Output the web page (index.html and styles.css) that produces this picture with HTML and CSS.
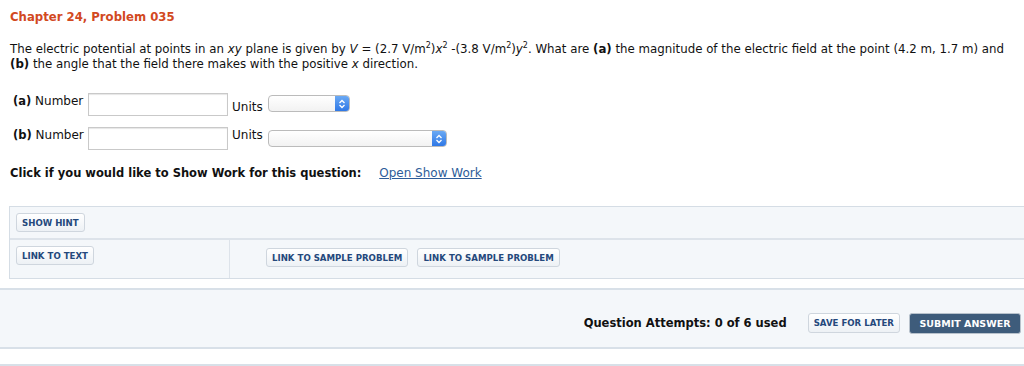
FILE: index.html
```html
<!DOCTYPE html>
<html>
<head>
<title>Chapter 24, Problem 035</title>
<link rel="stylesheet" href="styles.css">
</head>
<body>

<div class="content">

<h1 class="title">Chapter 24, Problem 035</h1>

<p class="question">
The electric potential at points in an <i>xy</i> plane is given by <i>V</i> = (2.7 V/m<sup>2</sup>)<i>x</i><sup>2</sup> -(3.8 V/m<sup>2</sup>)<i>y</i><sup>2</sup>. What are <b>(a)</b> the magnitude of the electric field at the point (4.2 m, 1.7 m) and <b>(b)</b> the angle that the field there makes with the positive <i>x</i> direction.
</p>

<div class="answer answer-a">
<span class="label"><b>(a)</b> Number</span>
<input class="number" type="text">
<span class="units">Units</span>
<span class="select short"><span class="arrows"><svg width="8" height="10" viewBox="0 0 8 10"><path d="M1.5 4 L4 1.5 L6.5 4 M1.5 6 L4 8.5 L6.5 6" fill="none" stroke="white" stroke-width="1.3"/></svg></span></span>
</div>

<div class="answer answer-b">
<span class="label"><b>(b)</b> Number</span>
<input class="number" type="text">
<span class="units">Units</span>
<span class="select long"><span class="arrows"><svg width="8" height="10" viewBox="0 0 8 10"><path d="M1.5 4 L4 1.5 L6.5 4 M1.5 6 L4 8.5 L6.5 6" fill="none" stroke="white" stroke-width="1.3"/></svg></span></span>
</div>

<div class="showwork">
<b>Click if you would like to Show Work for this question:</b>
<a href="#">Open Show Work</a>
</div>

<div class="hintbox">
<div class="hintrow">
<button class="smallbtn">Show Hint</button>
</div>
<div class="hintrow links">
<div class="cell left">
<button class="smallbtn">Link to Text</button>
</div>
<div class="cell right">
<button class="smallbtn">Link to Sample Problem</button>
<button class="smallbtn">Link to Sample Problem</button>
</div>
</div>
</div>

</div>

<div class="submitbar">
<span class="attempts">Question Attempts: 0 of 6 used</span>
<button class="smallbtn save">Save for Later</button>
<button class="submit">Submit Answer</button>
</div>

<div class="endline"></div>

</body>
</html>
```

FILE: styles.css
```css
body{
margin:0;
background:white;
color:#111;
font-family:"DejaVu Sans",Verdana,sans-serif;
font-size:12px;
}

.content{
padding:0 0 0 9px;
}

.title{
margin:0;
padding:10px 0 0 1px;
font-size:11.7px;
line-height:15px;
color:#d2491f;
}

.question{
margin:17px 0 0 1px;
line-height:15px;
width:1008px;
font-size:11.8px;
}

.question sup{
font-size:8px;
line-height:0;
}

.answer{
display:flex;
align-items:flex-start;
}

.answer-a{
margin-top:21px;
}

.answer-b{
margin-top:11px;
}

.label{
width:75px;
padding-left:4px;
margin-top:1px;
line-height:15px;
}

.label b{
font-size:11.5px;
}

.number{
width:138px;
height:21px;
margin:0;
padding:0;
border:1px solid #c9c9c9;
box-shadow:inset 0 1px 1px #e6e6e6;
}

.units{
margin-left:4px;
width:36px;
line-height:15px;
}

.answer-a .units{
margin-top:7px;
}

.answer-b .units{
margin-top:1px;
}

.select{
display:flex;
justify-content:flex-end;
height:15px;
border:1px solid #bbb;
border-radius:4px;
background:linear-gradient(#ffffff,#f2f2f2);
overflow:hidden;
}

.answer-a .select{
margin-top:2px;
width:80px;
}

.answer-b .select{
margin-top:3px;
width:177px;
}

.arrows{
width:14px;
display:flex;
align-items:center;
justify-content:center;
background:linear-gradient(#6aa9f4,#2f78e6);
}

.showwork{
margin:16px 0 0 1px;
line-height:15px;
}

.showwork b{
font-size:11.5px;
}

.showwork a{
margin-left:14px;
color:#2d5c99;
}

.hintbox{
margin-top:25px;
border:1px solid #d5dde5;
border-right:none;
background:#f4f7fa;
}

.hintrow{
height:31px;
padding:6px 0 0 6px;
box-sizing:border-box;
}

.hintrow.links{
display:flex;
height:40px;
padding:0;
border-top:2px solid #dde3ea;
}

.cell.left{
width:213px;
padding:6px 0 0 6px;
border-right:1px solid #dde3ea;
}

.cell.right{
padding:8px 0 0 36px;
display:flex;
gap:9px;
align-items:flex-start;
}

.smallbtn{
height:19px;
padding:0 5px;
border:1px solid #cfd6de;
border-radius:3px;
background:linear-gradient(#ffffff,#edf1f5);
color:#24487c;
font-family:"DejaVu Sans",Verdana,sans-serif;
font-size:8.6px;
font-weight:bold;
text-transform:uppercase;
}

.submitbar{
margin-top:9px;
height:61px;
box-sizing:border-box;
display:flex;
align-items:flex-start;
justify-content:flex-end;
padding:23px 3px 0 0;
border-top:2px solid #d8e0e8;
border-bottom:2px solid #d8e0e8;
background:#f4f7fa;
}

.attempts{
font-weight:bold;
font-size:11.5px;
line-height:20px;
margin-right:21px;
}

.save{
height:20px;
margin-right:9px;
}

.submit{
height:21px;
width:112px;
border:1px solid #b8c2cc;
border-radius:3px;
background:#3e5c7b;
color:white;
font-family:"DejaVu Sans",Verdana,sans-serif;
font-size:9.5px;
font-weight:bold;
text-transform:uppercase;
}

.endline{
margin-top:15px;
border-top:2px solid #d8e0e8;
}
```
